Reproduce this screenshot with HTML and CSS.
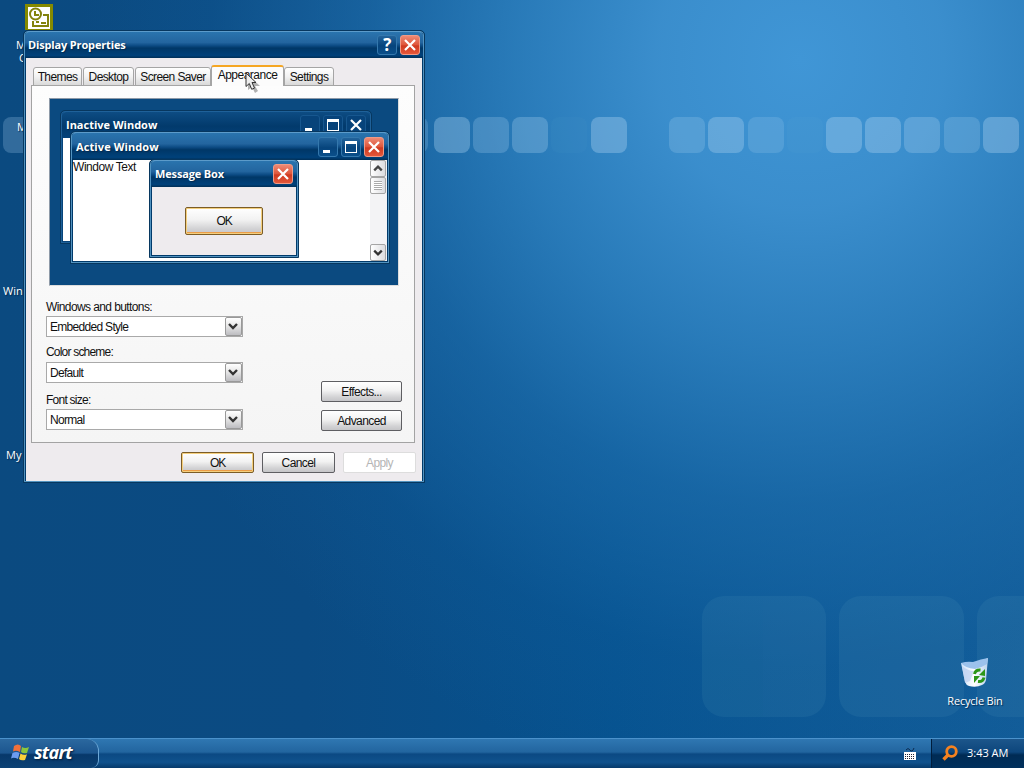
FILE: index.html
```
<!DOCTYPE html>
<html lang="en">
<head>
    <meta charset="UTF-8">
    <meta name="viewport" content="width=device-width, initial-scale=1.0">
    <title>Display Properties</title>
    <link rel="stylesheet" href="styles.css">
</head>
<body>
    <svg class="symbols">
        <symbol id="close" viewBox="0 0 20 20"><path d="M5 5l10 10M15 5L5 15" stroke="#fff" stroke-width="2.200" fill="none"/></symbol>
        <symbol id="max" viewBox="0 0 20 20"><path d="M4 4h12v12H4zM5 7v8h10V7z" fill="#fff" fill-rule="evenodd"/></symbol>
        <symbol id="min" viewBox="0 0 20 20"><path d="M5 13h7v3H5z" fill="#fff"/></symbol>
        <symbol id="down" viewBox="0 0 16 18"><path d="M4 7l4 4 4-4" stroke="#333" stroke-width="2.400" fill="none"/></symbol>
        <symbol id="up" viewBox="0 0 16 18"><path d="M4 11l4-4 4 4" stroke="#444" stroke-width="2.400" fill="none"/></symbol>
    </svg>

    <div class="desktop">
        <!-- wallpaper squares -->
        <svg class="wallpaper" width="1024" height="738">
            <g fill="#a9d0ee">
                <rect x="3" y="117" width="35" height="36" rx="8" opacity=".25"/>
                <rect x="395" y="117" width="33" height="36" rx="8" opacity=".22"/>
                <rect x="434" y="117" width="36" height="36" rx="8" opacity=".37"/>
                <rect x="473" y="117" width="36" height="36" rx="8" opacity=".26"/>
                <rect x="512" y="117" width="36" height="36" rx="8" opacity=".3"/>
                <rect x="551" y="117" width="36" height="36" rx="8" opacity=".03"/>
                <rect x="591" y="117" width="36" height="36" rx="8" opacity=".38"/>
                <rect x="669" y="117" width="36" height="36" rx="8" opacity=".24"/>
                <rect x="708" y="117" width="36" height="36" rx="8" opacity=".36"/>
                <rect x="748" y="117" width="36" height="36" rx="8" opacity=".2"/>
                <rect x="787" y="117" width="36" height="36" rx="8" opacity=".03"/>
                <rect x="826" y="117" width="36" height="36" rx="8" opacity=".38"/>
                <rect x="865" y="117" width="36" height="36" rx="8" opacity=".38"/>
                <rect x="904" y="117" width="36" height="36" rx="8" opacity=".3"/>
                <rect x="944" y="117" width="36" height="36" rx="8" opacity=".24"/>
                <rect x="983" y="117" width="36" height="36" rx="8" opacity=".38"/>
            </g>
            <g fill="#6fb0c8" opacity=".1">
                <rect x="702" y="596" width="124" height="121" rx="22"/>
                <rect x="839" y="596" width="125" height="121" rx="22"/>
                <rect x="977" y="596" width="125" height="121" rx="22"/>
            </g>
        </svg>

        <svg class="icon-outlook" width="28" height="26" viewBox="0 0 28 26">
            <path d="M0 0h28v26H0z" fill="#858a00"/>
            <path d="M3 3h22v22H3z" fill="#fff"/>
            <g fill="none" stroke="#82820c" stroke-width="2">
                <circle cx="10.500" cy="10" r="5.500"/>
                <path d="M10 7v4h4M8 17v5h15V11h-5M11 18h3M16 19h5"/>
            </g>
        </svg>
        <span class="icon-label label-1">M</span>
        <span class="icon-label label-2">C</span>
        <span class="icon-label label-3">M</span>
        <span class="icon-label label-4">Win</span>
        <span class="icon-label label-5">My</span>

        <div class="recycle">
            <svg width="32" height="32" viewBox="0 0 32 32">
                <defs>
                    <linearGradient id="bin" x1="0" x2="1">
                        <stop offset="0" stop-color="#cfe3fa"/>
                        <stop offset=".5" stop-color="#fff"/>
                        <stop offset="1" stop-color="#b8d2ee"/>
                    </linearGradient>
                </defs>
                <path d="M2 6Q14 8 29 1l-2 22q-1 4-4 5-6 3-13 1-3-1-4-4z" fill="url(#bin)"/>
                <path d="M2 6q6-2 12-1 8-3 15-4l-1 6q-6 4-12 5Q6 11 2 6z" fill="#9cc2ec"/>
                <path d="M3 9q6 5 12 5l-4 10-5 2z" fill="#bccff0" opacity=".7"/>
                <path d="M15.500 17q1-4.500 6-4" stroke="#2c9618" stroke-width="3" fill="none"/>
                <path d="M20 18l6-6v7z" fill="#2c9618"/>
                <path d="M25 20.500q-1 4.500-6 4" stroke="#2c9618" stroke-width="3" fill="none"/>
                <path d="M21 19l-6 0v7z" fill="#2c9618"/>
            </svg>
            <span>Recycle Bin</span>
        </div>

        <div class="window dialog">
            <div class="titlebar">
                <span class="title">Display Properties</span>
                <span class="tb-btn help">?</span>
                <span class="tb-btn close"><svg><use href="#close"/></svg></span>
            </div>
            <div class="dialog-body">
                <div class="tabs">
                    <div class="tab themes"><span>Themes</span></div>
                    <div class="tab desk"><span>Desktop</span></div>
                    <div class="tab saver"><span>Screen Saver</span></div>
                    <div class="tab active"><span>Appearance</span></div>
                    <div class="tab settings"><span>Settings</span></div>
                </div>
                <div class="panel">
                    <div class="preview">
                        <div class="window inactive-win">
                            <div class="titlebar">
                                <span class="title">Inactive Window</span>
                                <span class="tb-btn"><svg><use href="#min"/></svg></span>
                                <span class="tb-btn"><svg><use href="#max"/></svg></span>
                                <span class="tb-btn"><svg><use href="#close"/></svg></span>
                            </div>
                            <div class="win-content"></div>
                        </div>
                        <div class="window active-win">
                            <div class="titlebar">
                                <span class="title">Active Window</span>
                                <span class="tb-btn"><svg><use href="#min"/></svg></span>
                                <span class="tb-btn"><svg><use href="#max"/></svg></span>
                                <span class="tb-btn close"><svg><use href="#close"/></svg></span>
                            </div>
                            <div class="win-content">
                                <span class="win-text">Window Text</span>
                                <div class="scrollbar">
                                    <div class="sb-btn"><svg><use href="#up"/></svg></div>
                                    <div class="sb-btn thumb"><i></i></div>
                                    <div class="sb-btn last"><svg><use href="#down"/></svg></div>
                                </div>
                            </div>
                        </div>
                        <div class="window message-box">
                            <div class="titlebar">
                                <span class="title">Message Box</span>
                                <span class="tb-btn close"><svg><use href="#close"/></svg></span>
                            </div>
                            <div class="message-body">
                                <div class="btn default"><span class="ok">OK</span></div>
                            </div>
                        </div>
                    </div>
                    <div class="settings-row">
                        <div class="fields">
                            <label class="l-style">Windows and buttons:</label>
                            <div class="select"><span>Embedded Style</span><b><svg><use href="#down"/></svg></b></div>
                            <label class="l-color">Color scheme:</label>
                            <div class="select"><span>Default</span><b><svg><use href="#down"/></svg></b></div>
                            <label class="l-font">Font size:</label>
                            <div class="select"><span>Normal</span><b><svg><use href="#down"/></svg></b></div>
                        </div>
                        <div class="side-buttons">
                            <div class="btn">Effects...</div>
                            <div class="btn">Advanced</div>
                        </div>
                    </div>
                </div>
                <div class="actions">
                    <div class="btn default"><span class="ok">OK</span></div>
                    <div class="btn">Cancel</div>
                    <div class="btn disabled">Apply</div>
                </div>
            </div>
        </div>

        <svg class="cursor" width="16" height="22" viewBox="0 0 16 22">
            <path d="M3 3v15l4-3 3 6 3-2-3-5h5z" fill="#000" opacity=".3"/>
            <path d="M1 1v13.500l3.300-3 2.400 5.800 2.800-1.200-2.500-5.600H11z" fill="#eee" stroke="#333"/>
        </svg>
    </div>

    <div class="taskbar">
        <div class="start">
            <svg width="19" height="19" viewBox="0 0 19 19">
                <path d="M3 3q4-3 7 0L9 9Q5 7 2 8.500z" fill="#f0703a"/>
                <path d="M11 4q3 2 7 0l-2 6q-4 1-6-1z" fill="#8cc63c"/>
                <path d="M1.500 10q4-2 7 0L7 16q-4-2-7-.5z" fill="#6c9cf0"/>
                <path d="M9.500 10.500q3 2 6.500.7L14 17q-4 1-6-1z" fill="#fbd03a"/>
            </svg>
            <span>start</span>
        </div>
        <svg class="keyboard" width="14" height="14" viewBox="0 0 14 14">
            <path d="M3 3q2-3 4 0t4-2" stroke="#0a2a50" fill="none"/>
            <path d="M1 5h12v8H1z" fill="#fff"/>
            <path d="M2 7.500h10M2 9.500h10M2 11.500h10" stroke="#223" stroke-dasharray="1 1"/>
        </svg>
        <div class="tray">
            <svg width="17" height="17" viewBox="0 0 17 17">
                <circle cx="9.500" cy="6.500" r="4.800" fill="none" stroke="#f58220" stroke-width="2.800"/>
                <path d="M6.500 9.500L1.500 14.500" stroke="#f58220" stroke-width="3.400"/>
            </svg>
            <span>3:43 AM</span>
        </div>
    </div>
</body>
</html>
```
FILE: styles.css
```
* {
    box-sizing: border-box;
}

body {
    margin: 0;
    width: 1024px;
    height: 768px;
    overflow: hidden;
    display: flex;
    flex-direction: column;
    font-family: "Liberation Sans", Arial, sans-serif;
    font-size: 12px;
    line-height: 14px;
    letter-spacing: -0.6px;
    color: #111;
}

.symbols {
    position: absolute;
    width: 0;
    height: 0;
}

/* desktop */
.desktop {
    position: relative;
    flex: 1;
    background:
        radial-gradient(ellipse 720px 740px at 800px 60px, #4096d6 0, rgba(62, 146, 209, 0.93) 20%, rgba(50, 134, 197, 0.78) 40%, rgba(36, 118, 182, 0.52) 60%, rgba(20, 100, 165, 0.2) 82%, rgba(15, 90, 150, 0) 100%),
        linear-gradient(90deg, #0b4a80 0, #0b4b83 30%, #06528f 60%, #125c98 100%);
}

.wallpaper {
    position: absolute;
    left: 0;
    top: 0;
}

.icon-outlook {
    position: absolute;
    left: 25px;
    top: 4px;
}

.icon-label {
    position: absolute;
    color: #fff;
    font-family: "Open Sans", sans-serif;
    font-size: 11px;
    letter-spacing: 0;
    text-shadow: 1px 1px 1px #052c50;
}

.label-1 { left: 16px; top: 38px; }
.label-2 { left: 19px; top: 51px; }
.label-3 { left: 17px; top: 120px; }
.label-4 { left: 3px; top: 284px; }
.label-5 { left: 6px; top: 448px; }

.recycle {
    position: absolute;
    left: 935px;
    top: 657px;
    width: 80px;
    display: flex;
    flex-direction: column;
    align-items: center;
    gap: 5px;
    color: #fff;
    font-family: "Open Sans", sans-serif;
    font-size: 11px;
    letter-spacing: -0.2px;
    white-space: nowrap;
    text-shadow: 1px 1px 1px #052c50;
}

/* windows */
.window {
    position: absolute;
    z-index: 1;
    display: flex;
    flex-direction: column;
    border: 1px solid #07375f;
    border-radius: 5px 5px 0 0;
    padding: 0 2px 2px;
    background: #003a6b;
    box-shadow: inset 0 0 0 1px #5293c0;
}

.titlebar {
    display: flex;
    align-items: center;
    gap: 3px;
    height: 27px;
    flex: none;
    margin: 0 -1px;
    padding: 0 2px 0 3px;
    border-top: 1px solid #5c9bca;
    border-radius: 5px 5px 0 0;
    background: linear-gradient(#2a74ae 0, #23659f 40%, #0d4c85 52%, #003767 62%, #00417a 90%, #002f57 100%);
}

.title {
    flex: 1;
    color: #fff;
    font-family: "Open Sans", sans-serif;
    font-weight: bold;
    font-size: 11px;
    letter-spacing: -0.15px;
    white-space: nowrap;
    text-shadow: 1px 1px 1px #002a50;
}

.tb-btn {
    width: 20px;
    height: 20px;
    border: 1px solid #3478ad;
    border-radius: 3px;
    background: linear-gradient(#22639b, #06447c 55%, #0a4f8a);
    color: #fff;
}

.tb-btn svg {
    display: block;
    width: 20px;
    height: 20px;
    margin: -1px;
}

.tb-btn.close {
    border-color: #f09a86;
    background: linear-gradient(#ed8974, #df573c 48%, #cf3a20 55%, #e4573a);
}

.help {
    font: bold 17px/18px "Open Sans", sans-serif;
    text-align: center;
}

.dialog {
    left: 23px;
    top: 30px;
    width: 402px;
    height: 453px;
}

.dialog > .titlebar {
    padding-left: 3px;
    padding-right: 3px;
}

.dialog-body {
    flex: 1;
    display: flex;
    flex-direction: column;
    padding: 7px 7px 8px 5px;
    background: #eeebee;
}

/* tabs */
.tabs {
    display: flex;
    align-items: flex-end;
    gap: 1px;
    height: 21px;
    padding-left: 2px;
    margin-bottom: -1px;
    z-index: 1;
}

.tab {
    height: 19px;
    border: 1px solid #a5a5a5;
    border-radius: 3px 3px 0 0;
    background: linear-gradient(#fff, #f2f2f2 50%, #d9d9d9);
    line-height: 18px;
    text-align: center;
    white-space: nowrap;
}

.themes { width: 49px; }
.desk { width: 51px; }
.saver { width: 76px; }
.settings { width: 50px; }

.tab.active {
    width: 73px;
    height: 21px;
    margin: 0 -1px;
    border-top: 2px solid #f5a623;
    border-bottom: 0;
    background: #fcfcfc;
    line-height: 17px;
    letter-spacing: -0.5px;
}

.panel {
    height: 358px;
    padding: 12px 16px 0 14px;
    border: 1px solid #a3a3a3;
    background: linear-gradient(#fdfdfd, #f5f5f5);
}

/* theme preview */
.preview {
    position: relative;
    width: 350px;
    height: 188px;
    margin-left: 3px;
    border: 1px solid #8e9aa8;
    border-right-color: #ddd;
    border-bottom-color: #ddd;
    background: #0b4a80;
}

.preview .titlebar {
    padding-left: 4px;
    padding-right: 4px;
}

.inactive-win {
    left: 10px;
    top: 11px;
    width: 312px;
    height: 134px;
    background: #07447a;
    box-shadow: inset 0 0 0 1px #1f6199;
}

.inactive-win .titlebar {
    background: linear-gradient(#0d4c83, #023a6c 55%, #04427a);
    border-top-color: #1f6199;
}

.inactive-win .tb-btn {
    border-color: #17578f;
    background: #07437a;
}

.active-win {
    left: 20px;
    top: 32px;
    width: 320px;
    height: 133px;
}

.active-win .titlebar {
    height: 28px;
    padding-left: 4px;
    padding-right: 4px;
}

.inactive-win .title {
    letter-spacing: 0;
}

.active-win .title {
    letter-spacing: 0.1px;
}

.message-box {
    left: 99px;
    top: 60px;
    width: 150px;
    height: 99px;
}

.win-content {
    flex: 1;
    display: flex;
    justify-content: space-between;
    background: #fff;
}

.win-text {
    letter-spacing: -0.45px;
}

.scrollbar {
    width: 17px;
    display: flex;
    flex-direction: column;
    background: #f3f3f5;
}

.sb-btn {
    width: 16px;
    height: 17px;
    border: 1px solid #a5a5a5;
    border-radius: 2px;
    background: linear-gradient(90deg, #fff, #dcdcdf);
}

.sb-btn svg {
    display: block;
    width: 16px;
    height: 17px;
    margin: -1px;
}

.sb-btn.last {
    margin-top: auto;
}

.thumb i {
    display: block;
    width: 8px;
    height: 9px;
    margin: 3px;
    background: repeating-linear-gradient(#aaa 0, #aaa 1px, #fff 1px, #fff 2px);
}

.message-body {
    flex: 1;
    display: flex;
    align-items: center;
    justify-content: center;
    background: #eeebee;
}

/* buttons */
.btn {
    width: 73px;
    height: 21px;
    border: 1px solid #5e5e62;
    border-radius: 2px;
    background: linear-gradient(#fff, #f2f2f2 45%, #d2d2d4 80%, #c5c5c8);
    line-height: 20px;
    text-align: center;
}

.btn.default {
    border-color: #7b5c26;
    box-shadow: inset 0 0 0 1px #f4cf7e, inset 0 -2px 0 #ec9c46;
}

.btn.disabled {
    border-color: #ddd;
    background: #fff;
    color: #b5b5b5;
}

.message-body .btn {
    width: 78px;
    height: 28px;
    line-height: 27px;
}

.ok {
    letter-spacing: -1.2px;
}

/* form */
.settings-row {
    display: flex;
    justify-content: space-between;
    margin-right: -4px;
}

.fields {
    width: 197px;
    display: flex;
    flex-direction: column;
}

.fields label {
    height: 14px;
}

.l-style { margin: 14px 0 2px; }
.l-color { margin: 8px 0 3px; letter-spacing: -0.8px; }
.l-font { margin: 10px 0 2px; letter-spacing: -0.75px; }

.select {
    display: flex;
    justify-content: space-between;
    height: 21px;
    padding-left: 3px;
    border: 1px solid #a9a9a9;
    background: #fff;
    line-height: 20px;
    letter-spacing: -0.7px;
}

.select b {
    width: 17px;
    height: 19px;
    border: 1px solid #999;
    border-radius: 2px;
    background: linear-gradient(#fff, #e8e8e8 45%, #bdbdc1);
}

.select svg {
    display: block;
    width: 16px;
    height: 18px;
    margin: -1px;
}

.side-buttons {
    display: flex;
    flex-direction: column;
    gap: 8px;
    padding-top: 95px;
}

.side-buttons .btn {
    width: 81px;
}

.actions {
    display: flex;
    justify-content: flex-end;
    gap: 8px;
    padding-top: 9px;
    margin-right: -1px;
}

.cursor {
    position: absolute;
    left: 245px;
    top: 72px;
    z-index: 2;
}

/* taskbar */
.taskbar {
    display: flex;
    align-items: center;
    height: 30px;
    border-top: 1px solid #4b92cc;
    background: linear-gradient(#2f77b2 0, #22659f 45%, #0b4983 52%, #10528d 80%, #063a6b 100%);
}

.start {
    display: flex;
    align-items: center;
    gap: 4px;
    width: 99px;
    height: 29px;
    padding-left: 11px;
    border-right: 1px solid #6ca7d6;
    border-radius: 0 12px 8px 0;
    background: linear-gradient(#2b689f 0, #1c568f 48%, #07386a 54%, #0c4275 100%);
    color: #fff;
    font: italic bold 18px/26px "Open Sans", sans-serif;
    letter-spacing: -0.7px;
    text-shadow: 1px 1px 2px #001c3a;
}

.start span {
    height: 29px;
}

.start svg {
    margin-bottom: 2px;
}

.keyboard {
    margin-left: auto;
    margin-right: 14px;
}

.tray {
    display: flex;
    align-items: center;
    gap: 8px;
    width: 93px;
    height: 29px;
    padding-left: 10px;
    border-left: 1px solid #001d3c;
    background: linear-gradient(#1c568b 0, #0d467c 45%, #002b54 55%, #00305c 100%);
    color: #fff;
    font-family: "Open Sans", sans-serif;
    font-size: 11px;
    letter-spacing: 0;
    white-space: nowrap;
}

.tray span {
    margin-bottom: 2px;
}
```
